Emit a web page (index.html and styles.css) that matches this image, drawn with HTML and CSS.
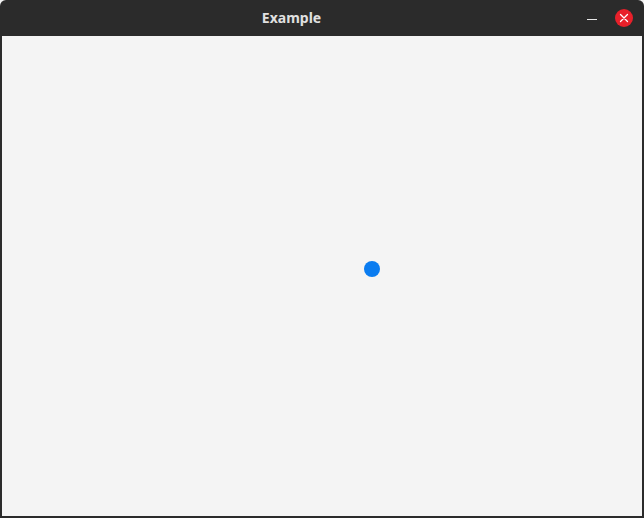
FILE: index.html
```html
<!DOCTYPE html>
<html>
<head>
<meta charset="utf-8">
<link rel="stylesheet" href="styles.css">
</head>
<body>
<div class="window">
  <div class="titlebar">
    <div class="title">Example</div>
    <div class="controls">
      <div class="minimize"></div>
      <div class="close">
        <svg width="18" height="18" viewBox="0 0 18 18"><path d="M5.5 5.5 L12.5 12.5 M12.5 5.5 L5.5 12.5" stroke="#fff" stroke-width="1.3" stroke-linecap="round"/></svg>
      </div>
    </div>
  </div>
  <div class="content">
    <div class="dot"></div>
  </div>
</div>
</body>
</html>
```
FILE: styles.css
```css
html, body {
  margin: 0;
  padding: 0;
  background: #f4f4f4;
}
.window {
  width: 644px;
  height: 518px;
  display: flex;
  flex-direction: column;
  background: #2b2b2b;
  border-radius: 6px 6px 0 0;
  overflow: hidden;
}
.titlebar {
  height: 36px;
  flex: none;
  display: flex;
  align-items: center;
}
.title {
  flex: 1;
  text-align: center;
  font-family: "Noto Sans", "DejaVu Sans", sans-serif;
  font-weight: bold;
  font-size: 14px;
  color: #e0e0e0;
  margin-top: -1px;
}
.controls {
  flex: none;
  padding: 0 11px 0 4px;
  display: flex;
  align-items: center;
  gap: 18px;
}
.minimize {
  width: 10px;
  height: 1px;
  background: #e8e8e8;
  margin-top: 3px;
}
.close {
  width: 18px;
  height: 18px;
  border-radius: 50%;
  background: #e8202a;
  display: flex;
}
.content {
  flex: 1;
  margin: 0 2px 2px 2px;
  background: #f4f4f4;
  position: relative;
}
.dot {
  position: absolute;
  left: 362px;
  top: 225px;
  width: 16px;
  height: 16px;
  border-radius: 50%;
  background: #0a7cf0;
}
```
